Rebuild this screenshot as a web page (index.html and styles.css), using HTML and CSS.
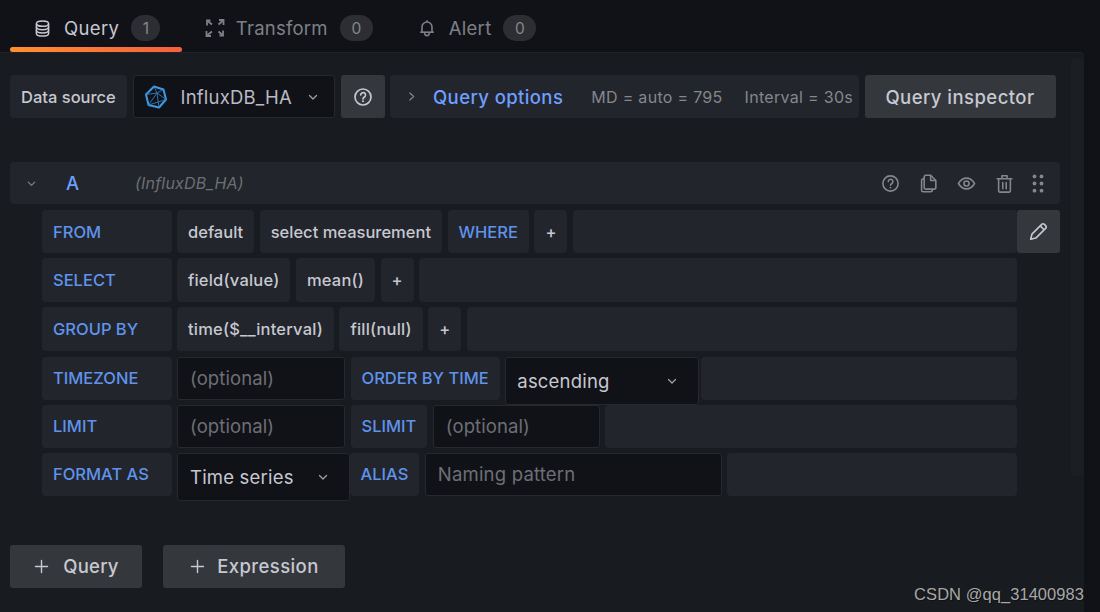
FILE: index.html
```html
<!DOCTYPE html>
<html lang="en">
<head>
<meta charset="utf-8">
<title>Query editor</title>
<link rel="stylesheet" href="styles.css">
</head>
<body>
<svg class="defs" width="0" height="0" aria-hidden="true">
  <symbol id="i-help" viewBox="0 0 24 24"><circle cx="12" cy="12" r="9.6" fill="none" stroke="currentColor" stroke-width="2"/><path d="M9.2 9.6a2.9 2.9 0 1 1 4.5 2.4c-1 .7-1.7 1.2-1.7 2.3" fill="none" stroke="currentColor" stroke-width="2" stroke-linecap="round"/><circle cx="12" cy="17.2" r="1.2" fill="currentColor"/></symbol>
  <symbol id="i-down" viewBox="0 0 24 24"><path d="M6 9.5l6 6 6-6" fill="none" stroke="currentColor" stroke-width="2.2" stroke-linecap="round" stroke-linejoin="round"/></symbol>
  <symbol id="i-plus" viewBox="0 0 24 24"><path d="M12 3.5v17M3.500 12h17" fill="none" stroke="currentColor" stroke-width="2" stroke-linecap="round"/></symbol>
</svg>

<nav class="tabs">
  <a class="tab tab-active">
    <svg class="tab-icon" viewBox="0 0 16 18"><g fill="none" stroke="currentColor" stroke-width="1.6"><ellipse cx="8" cy="3.800" rx="6.500" ry="2.800"/><path d="M1.500 3.800v10.400c0 1.600 2.900 2.900 6.500 2.900s6.500-1.300 6.500-2.900V3.800"/><path d="M1.500 7.300c0 1.600 2.900 2.900 6.500 2.900s6.500-1.300 6.500-2.900M1.500 10.800c0 1.600 2.900 2.900 6.500 2.900s6.500-1.300 6.500-2.900"/></g></svg>
    <span class="tab-text">Query</span><span class="badge">1</span>
  </a>
  <a class="tab">
    <svg class="tab-icon tab-icon-wide" viewBox="0 0 20 20"><g fill="none" stroke="currentColor" stroke-width="1.800"><path d="M2 7.500V2.500h3.500M14 2h4.500v5M18 12.500v5h-3.500M6 18H1.500v-5"/><path d="M2.500 3l4.500 3.500M17.500 3L13.500 6.500M17.500 17l-4-3.500M2.500 17L7 13.500"/></g></svg>
    <span class="tab-text">Transform</span><span class="badge badge-zero">0</span>
  </a>
  <a class="tab">
    <svg class="tab-icon tab-icon-bell" viewBox="0 0 16 18"><g fill="none" stroke="currentColor" stroke-width="1.600" stroke-linejoin="round"><path d="M8 1.200v1.300M3 13V8a5 5 0 0 1 10 0v5"/><path d="M1.200 13.200h13.600"/><path d="M5.700 13.500v.8a2.300 2.300 0 0 0 4.600 0v-.8"/></g></svg>
    <span class="tab-text">Alert</span><span class="badge badge-zero">0</span>
  </a>
</nav>

<main class="panel">
  <section class="toolbar">
    <span class="segment ds-label">Data source</span>
    <div class="field ds-select">
      <svg class="influx" viewBox="0 0 22 24"><g fill="none" stroke="#3d9be6" stroke-linejoin="round"><path d="M9 1.500l9.500 3 2.500 10-7 8-10.500-2.500L1 9.500z" stroke-width="2"/><path d="M1 9.500L12 8l2 14.500M12 8l6.500-3.500M12 8L9 1.500M12 8l-8.500 12M12 8l9 6.500M3.500 20L21 14.500" stroke-width=".9" stroke="#2f7cbd"/></g></svg>
      <span class="ds-name">InfluxDB_HA</span>
      <svg class="chev"><use href="#i-down"/></svg>
    </div>
    <button class="btn ds-help" type="button" aria-label="Help"><svg class="icon-19"><use href="#i-help"/></svg></button>
    <div class="segment options">
      <svg class="opt-chev" viewBox="0 0 24 24"><path d="M9 5.500l7 6.500-7 6.500" fill="none" stroke="currentColor" stroke-width="2.200" stroke-linecap="round" stroke-linejoin="round"/></svg>
      <span class="opt-title">Query options</span>
      <span class="opt-info opt-md">MD = auto = 795</span>
      <span class="opt-info opt-int">Interval = 30s</span>
    </div>
    <button class="btn inspector" type="button">Query inspector</button>
  </section>

  <header class="qhead">
    <svg class="qhead-chev"><use href="#i-down"/></svg>
    <span class="qhead-ref">A</span>
    <span class="qhead-ds">(InfluxDB_HA)</span>
    <div class="qhead-actions">
      <svg class="act" viewBox="0 0 24 24"><use href="#i-help"/></svg>
      <svg class="act" viewBox="0 0 20 22"><g fill="none" stroke="currentColor" stroke-width="1.800" stroke-linejoin="round"><path d="M7 1.500h5.500L18.500 7.500v8a2 2 0 0 1-2 2H7a2 2 0 0 1-2-2v-12a2 2 0 0 1 2-2z"/><path d="M12.500 1.500v6h6"/><path d="M5 5.500H4a2 2 0 0 0-2 2v11a2 2 0 0 0 2 2h8.500a2 2 0 0 0 2-2v-1"/></g></svg>
      <svg class="act" viewBox="0 0 24 24"><g fill="none" stroke="currentColor" stroke-width="2"><path d="M1.800 12C4.500 7.500 8 5.200 12 5.200s7.500 2.300 10.200 6.800c-2.700 4.500-6.200 6.800-10.200 6.800S4.500 16.500 1.800 12z" stroke-linejoin="round"/><circle cx="12" cy="12" r="3.200"/></g></svg>
      <svg class="act" viewBox="0 0 20 22"><g fill="none" stroke="currentColor" stroke-width="1.800" stroke-linecap="round" stroke-linejoin="round"><path d="M1.500 5.500h17M7 5.500V2h6v3.500"/><path d="M3.200 5.500v14a1.500 1.500 0 0 0 1.500 1.500h10.600a1.500 1.500 0 0 0 1.500-1.500v-14"/><path d="M8 10v7M12 10v7"/></g></svg>
      <svg class="act act-grip" viewBox="0 0 12 20" fill="currentColor"><circle cx="2.300" cy="2.500" r="2"/><circle cx="9.700" cy="2.500" r="2"/><circle cx="2.300" cy="10" r="2"/><circle cx="9.700" cy="10" r="2"/><circle cx="2.300" cy="17.500" r="2"/><circle cx="9.700" cy="17.500" r="2"/></svg>
    </div>
  </header>

  <section class="rows">
    <div class="row">
      <span class="segment key key-main">FROM</span>
      <span class="segment val">default</span>
      <span class="segment val">select measurement</span>
      <span class="segment key">WHERE</span>
      <span class="segment val">+</span>
      <span class="segment filler"></span>
      <button class="btn pencil" type="button" aria-label="Edit"><svg viewBox="0 0 20 20"><g fill="none" stroke="currentColor" stroke-width="1.700" stroke-linejoin="round"><path d="M1.800 18.200l1.300-5.400L13.600 2.300a1.600 1.600 0 0 1 2.300 0l1.800 1.800a1.600 1.600 0 0 1 0 2.300L7.200 16.900z"/><path d="M11.800 4.100l4.100 4.100"/></g></svg></button>
    </div>
    <div class="row row-tall">
      <span class="segment key key-main">SELECT</span>
      <span class="segment val val-wide">field(value)</span>
      <span class="segment val val-wide">mean()</span>
      <span class="segment val">+</span>
      <span class="segment filler filler-end"></span>
    </div>
    <div class="row row-tall">
      <span class="segment key key-main">GROUP BY</span>
      <span class="segment val val-wide">time($__interval)</span>
      <span class="segment val val-wide">fill(null)</span>
      <span class="segment val">+</span>
      <span class="segment filler filler-end"></span>
    </div>
    <div class="row">
      <span class="segment key key-main">TIMEZONE</span>
      <span class="field input input-wide">(optional)</span>
      <span class="segment key">ORDER BY TIME</span>
      <div class="field select select-order"><span>ascending</span><svg class="chev"><use href="#i-down"/></svg></div>
      <span class="segment filler filler-end filler-tight"></span>
    </div>
    <div class="row">
      <span class="segment key key-main">LIMIT</span>
      <span class="field input input-wide">(optional)</span>
      <span class="segment key">SLIMIT</span>
      <span class="field input input-slimit">(optional)</span>
      <span class="segment filler filler-end"></span>
    </div>
    <div class="row">
      <span class="segment key key-main">FORMAT AS</span>
      <div class="field select select-format"><span>Time series</span><svg class="chev"><use href="#i-down"/></svg></div>
      <span class="segment key key-alias">ALIAS</span>
      <span class="field input input-alias">Naming pattern</span>
      <span class="segment filler filler-end"></span>
    </div>
  </section>

  <section class="adds">
    <button class="btn add add-query" type="button"><svg class="add-icon"><use href="#i-plus"/></svg>Query</button>
    <button class="btn add add-expr" type="button"><svg class="add-icon"><use href="#i-plus"/></svg>Expression</button>
  </section>
  <div class="track" aria-hidden="true"></div>
</main>
<div class="watermark">CSDN @qq_31400983</div>
</body>
</html>
```
FILE: styles.css
```css
* { box-sizing: border-box; }
html, body { margin: 0; height: 100%; overflow: hidden; }
body {
  position: relative;
  background: #111217;
  color: #c7c8d1;
  font-family: Inter, "Liberation Sans", sans-serif;
}
.defs { position: absolute; }

/* tabs */
.tabs { display: flex; height: 52px; margin-left: 10px; }
.tab {
  position: relative;
  display: flex;
  align-items: center;
  height: 47px;
  padding: 9px 21.500px 0 24.500px;
  color: #7e8087;
}
.tab-active { color: #c7c8d1; padding-left: 25px; padding-right: 22px; }
.tab-active::after {
  content: "";
  position: absolute;
  left: 0; right: 0; bottom: -5px;
  height: 5px;
  border-radius: 3px;
  background: linear-gradient(90deg, #ff9030, #f55f3e);
}
.tab-icon { width: 15px; height: 17px; margin-right: 14px; flex: none; }
.tab-icon-wide { width: 20px; height: 20px; margin: 0 11px 0 -2px; }
.tab-icon-bell { width: 16px; height: 18px; margin-right: 14px; }
.tab-text { font-size: 18.500px; letter-spacing: .25px; }
.tab-active .tab-text { letter-spacing: .35px; }
.badge {
  display: flex;
  align-items: center;
  justify-content: center;
  width: 29px;
  height: 26px;
  margin-left: 12px;
  border-radius: 13px;
  background: #2c2e33;
  color: #85878d;
  font-size: 15.500px;
}
.badge-zero { width: 33px; }

/* panel */
.panel {
  position: relative;
  width: 1084px;
  height: 560px;
  padding: 22px 0 0 10px;
  background: #181b1f;
  border-top: 1px solid #202226;
  border-top-right-radius: 4px;
}
.track {
  position: absolute;
  right: 0; top: 5px;
  width: 13px; height: 418px;
  background: #1b1e22;
  border-radius: 4px;
}

/* shared */
.segment {
  display: flex;
  align-items: center;
  height: 100%;
  padding: 0 11px;
  border-radius: 4px;
  background: #22252b;
  font-size: 16.500px;
  font-weight: 500;
  white-space: nowrap;
  flex: none;
}
.btn {
  display: flex;
  align-items: center;
  justify-content: center;
  padding: 0;
  border: 0;
  border-radius: 3px;
  background: #34373c;
  color: #c7c8d1;
  font-family: inherit;
  flex: none;
}
.field {
  display: flex;
  align-items: center;
  background: #111217;
  border: 1px solid #26282d;
  border-radius: 3px;
  flex: none;
}
.chev { width: 14px; height: 14px; color: #a0a1a8; flex: none; }

/* toolbar */
.toolbar { position: relative; z-index: 1; display: flex; height: 43px; gap: 5.500px; }
.ds-label { width: 117px; padding-right: 0; color: #c7c8d1; }
.ds-select { width: 202.500px; height: 100%; padding-left: 11px; }
.influx { width: 22px; height: 24px; flex: none; }
.ds-name { margin-left: 14px; font-size: 18.500px; letter-spacing: .2px; color: #b9bac4; }
.ds-select .chev { margin-left: 14px; }
.ds-help { width: 44px; height: 100%; }
.icon-19 { width: 20px; height: 20px; }
.options { width: 469px; padding-left: 15px; font-weight: 400; }
.opt-chev { width: 13px; height: 13px; color: #85878d; flex: none; }
.opt-title { margin-left: 15px; font-size: 18.500px; font-weight: 500; letter-spacing: .4px; color: #6e9fff; }
.opt-info { color: #85878d; font-size: 16px; letter-spacing: .3px; }
.opt-md { margin-left: 28px; }
.opt-int { margin-left: 22px; }
.inspector { width: 191px; height: 100%; font-size: 18.500px; font-weight: 500; letter-spacing: .45px; }

/* query header */
.qhead {
  display: flex;
  align-items: center;
  width: 1050px;
  height: 42px;
  margin-top: 44px;
  padding: 0 16px 0 15px;
  border-radius: 4px;
  background: #22252b;
}
.qhead-chev { width: 13px; height: 13px; color: #7e8087; flex: none; }
.qhead-ref { width: 69px; margin-left: 28px; color: #6e9fff; font-size: 18.500px; font-weight: 500; }
.qhead-ds { color: #6d6f76; font-size: 16px; font-style: italic; letter-spacing: .2px; }
.qhead-actions { display: flex; align-items: center; gap: 19px; margin-left: auto; color: #85878d; }
.act { width: 19px; height: 19px; display: block; }
.act-grip { width: 12px; height: 19px; margin-left: -1px; }

/* rows */
.rows { display: flex; flex-direction: column; gap: 5.200px; width: 1050px; margin-top: 6px; padding-left: 32px; }
.row { display: flex; gap: 5.500px; height: 43px; }
.row-tall { height: 44px; }
.key { color: #5f93ec; }
.key-main { width: 129.500px; }
.key-alias { margin-left: -6px; }
.val { color: #c7c8d1; }
.val-wide { letter-spacing: .2px; }
.filler { flex: 1; }
.filler-end { margin-right: 43px; }
.filler-tight { margin-left: -3.500px; }
.pencil { width: 43px; height: 43px; margin-left: -5px; }
.pencil svg { width: 19px; height: 19px; }

.input {
  height: 100%;
  padding-left: 12px;
  color: #6d6f76;
  font-size: 18.500px;
  letter-spacing: .1px;
}
.input-wide { width: 168px; }
.input-slimit { width: 167px; }
.input-alias { width: 297px; letter-spacing: .2px; }
.select { height: 48px; padding: 0 19px 0 11px; font-size: 18.500px; letter-spacing: .2px; color: #c7c8d1; justify-content: space-between; position: relative; z-index: 1; }
.select-order { width: 193.500px; }
.select-format { width: 173px; padding-left: 12px; }

/* add buttons */
.adds { display: flex; gap: 21px; height: 43px; margin-top: 49px; }
.add { font-size: 18.500px; font-weight: 500; letter-spacing: .2px; }
.add-icon { width: 17px; height: 17px; margin-right: 13px; flex: none; }
.add-query { width: 132px; }
.add-expr { width: 182px; letter-spacing: .4px; }
.add-expr .add-icon { margin-right: 11px; }

.watermark {
  position: absolute;
  right: 16px;
  top: 585px;
  color: #a8a8a8;
  font-family: "Liberation Sans", sans-serif;
  font-size: 16.500px;
  letter-spacing: .05px;
  white-space: nowrap;
  text-shadow: 1px 1px 0 #111;
}
```
